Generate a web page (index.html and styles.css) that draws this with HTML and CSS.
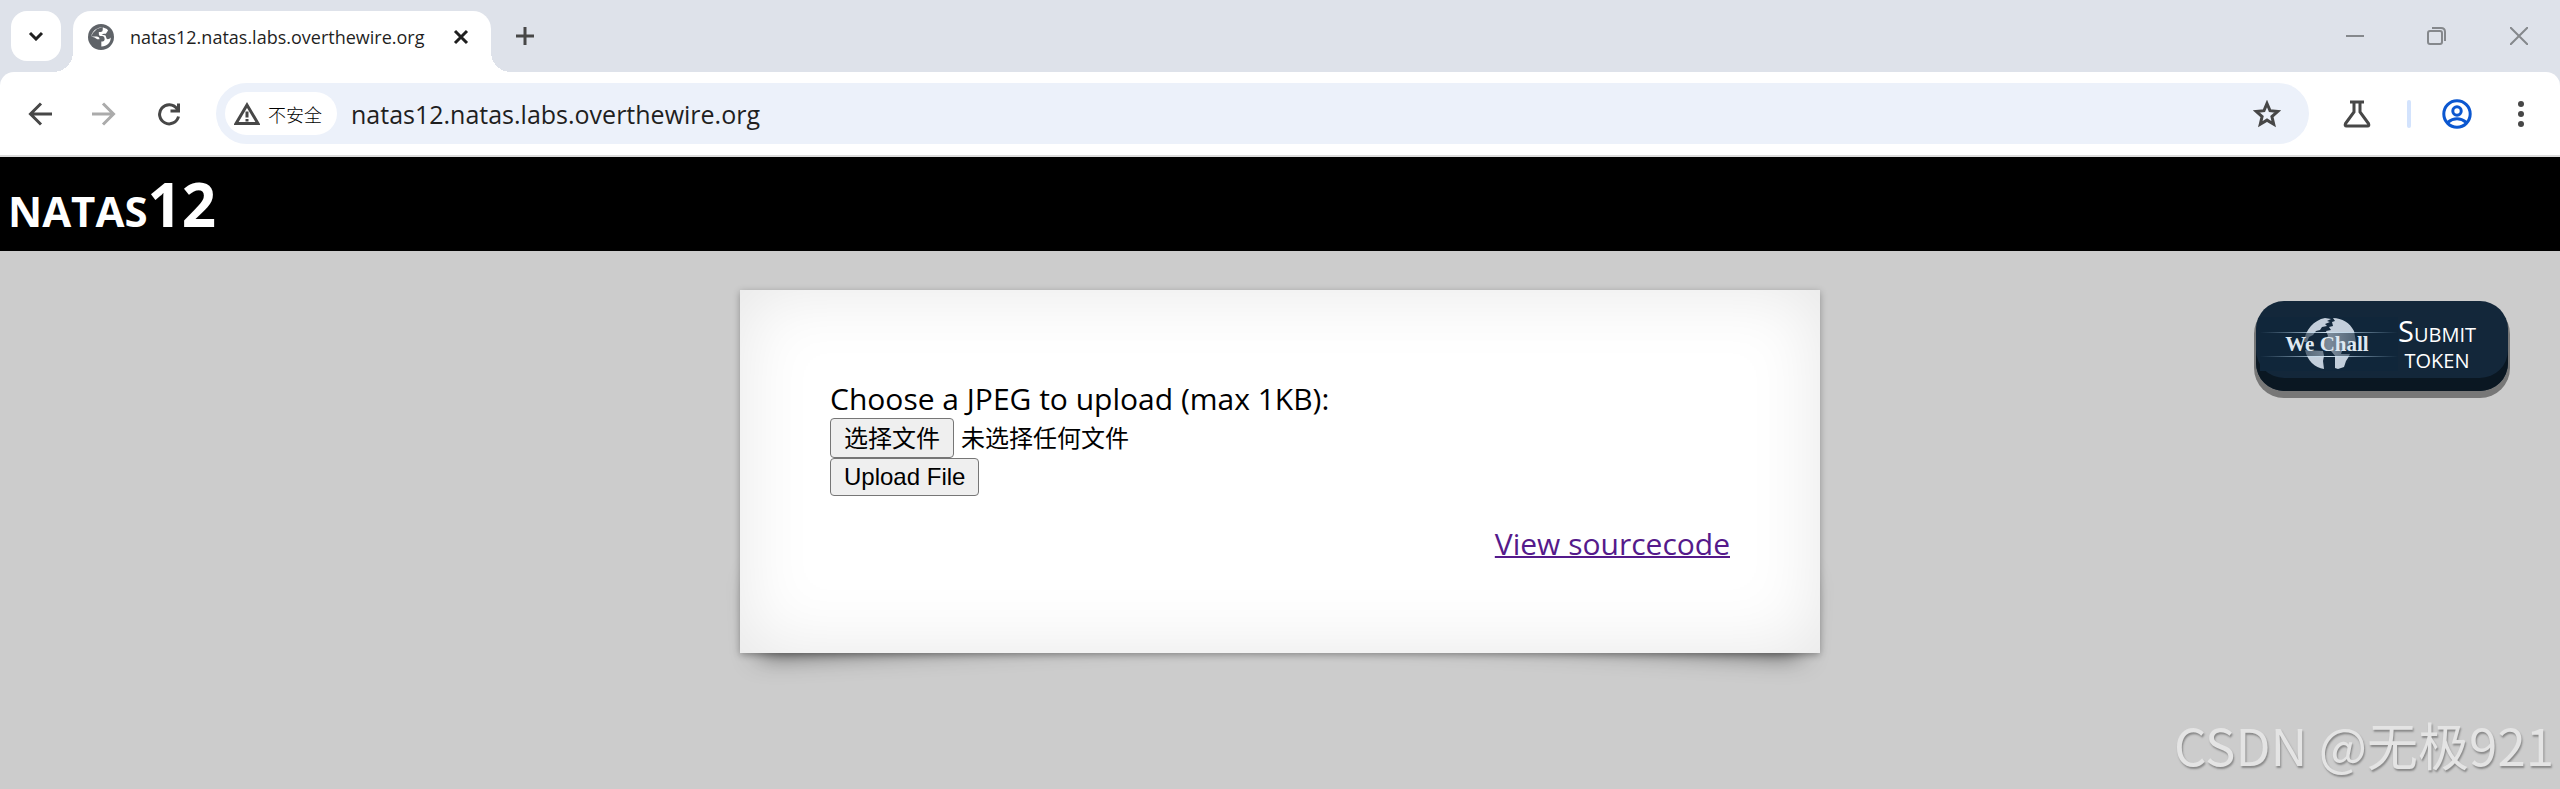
FILE: index.html
```html
<!DOCTYPE html>
<html lang="zh-CN">
<head>
    <meta charset="UTF-8">
    <meta name="viewport" content="width=device-width, initial-scale=1.0">
    <title>natas12.natas.labs.overthewire.org</title>
    <link rel="stylesheet" href="styles.css">
</head>
<body>
    <header class="browser">
        <div class="tabstrip">
            <button class="tab-search" aria-label="Search tabs">
                <svg width="16" height="10" viewBox="0 0 16 10"><path d="M2 2l6 6 6-6"/></svg>
            </button>
            <div class="tab">
                <svg class="tab__icon" width="26" height="26" viewBox="0 0 24 24">
                    <circle cx="12" cy="12" r="12"/>
                    <path fill="#fff" d="M3 11.500C3.500 7 8 2.800 13.600 3v2.600q0 1.800-2 1.800H10v2q0 1.500 1.500 1.600h1.800q2 .200 2 2.400v1.200q-.200 1.600-1.800 1.600h-1.200v4.600C17 21 21 17.500 21 12.500q-1 1.500-2.800 1.500-1.500-.200-1.500-2 0-1.800-2-1.800h-2.200l2-1.200h2l2-3-1-1.500-4-1.600-5 1.500-4 4zM3 11.500h5q2.600 0 2.600 2.600H8.500L6 12.500z"/>
                </svg>
                <span class="tab__title">natas12.natas.labs.overthewire.org</span>
                <button class="tab__close" aria-label="Close tab">
                    <svg width="16" height="16" viewBox="0 0 16 16"><path d="M2 2l12 12M14 2L2 14"/></svg>
                </button>
            </div>
            <button class="tab-new" aria-label="New tab">
                <svg width="18" height="18" viewBox="0 0 18 18"><path d="M9 0v18M0 9h18"/></svg>
            </button>
            <div class="window-controls">
                <button class="window-btn" aria-label="Minimize">
                    <svg width="18" height="18" viewBox="0 0 18 18"><path d="M0 9h18"/></svg>
                </button>
                <button class="window-btn" aria-label="Restore">
                    <svg width="20" height="20" viewBox="0 0 20 20"><rect x="1" y="5" width="14" height="13" rx="2"/><path d="M5 2h9q4 0 4 4v9"/></svg>
                </button>
                <button class="window-btn" aria-label="Close">
                    <svg width="18" height="18" viewBox="0 0 18 18"><path d="M0 0l18 18M18 0L0 18"/></svg>
                </button>
            </div>
        </div>

        <div class="toolbar">
            <button class="tool-btn" aria-label="Back">
                <svg width="24" height="24" viewBox="0 0 24 24"><path d="M24 12H3M13 1.500L2.500 12 13 22.500"/></svg>
            </button>
            <button class="tool-btn tool-btn--disabled" aria-label="Forward">
                <svg width="24" height="24" viewBox="0 0 24 24"><path d="M0 12h21M11 1.500L21.500 12 11 22.500"/></svg>
            </button>
            <button class="tool-btn" aria-label="Reload">
                <svg width="24" height="24" viewBox="0 0 24 24"><path d="M22.500 14.500A9.600 9.600 0 1 1 21 6.700l1.500 2M22.500 1.500v7.500h-8"/></svg>
            </button>
            <div class="omnibox">
                <button class="omnibox__chip">
                    <svg width="26" height="24" viewBox="0 0 26 24"><path d="M13 3l11 18.500H2zM13 9.500v6M13 17v2.500"/></svg>
                    <span>不安全</span>
                </button>
                <input class="omnibox__url" type="text" value="natas12.natas.labs.overthewire.org" aria-label="Address">
                <button class="omnibox__star" aria-label="Bookmark">
                    <svg width="28" height="28" viewBox="0 0 28 28"><path d="M14 3.500l3 7.200 7.800.700-5.900 5.100 1.800 7.700L14 20.100l-6.700 4.100 1.800-7.700-5.900-5.100 7.800-.700z"/></svg>
                </button>
            </div>
            <button class="tool-btn" aria-label="Labs">
                <svg width="28" height="28" viewBox="0 0 28 28"><path d="M7 2h14M11 2v10L2.500 23.500q-1 2.500 1 2.500h21q2 0 1-2.500L17 12V2"/></svg>
            </button>
            <span class="toolbar__divider"></span>
            <button class="tool-btn tool-btn--profile" aria-label="Profile">
                <svg width="30" height="30" viewBox="0 0 30 30"><circle cx="15" cy="15" r="13.200"/><circle cx="15" cy="12" r="4.200"/><path d="M5.500 23.500q9.500-7.500 19 0"/></svg>
            </button>
            <button class="tool-btn tool-btn--menu" aria-label="Menu">
                <svg width="6" height="26" viewBox="0 0 6 26"><circle cx="3" cy="3" r="3"/><circle cx="3" cy="13" r="3"/><circle cx="3" cy="23" r="3"/></svg>
            </button>
        </div>
    </header>

    <h1 class="level-title">natas12</h1>

    <main class="page">
        <div class="content">
            <form class="upload">
                <div>Choose a JPEG to upload (max 1KB):</div>
                <div class="upload__row">
                    <input class="upload__input" type="file" id="uploadedfile">
                    <label class="upload__choose" for="uploadedfile">选择文件</label>
                    <span class="upload__status">未选择任何文件</span>
                </div>
                <button class="upload__submit" type="submit">Upload File</button>
            </form>
            <a class="viewsource" href="#">View sourcecode</a>
        </div>

        <a class="wechall" href="#">
            <svg class="wechall__logo" width="138" height="54" viewBox="0 0 138 54">
                <defs>
                    <linearGradient id="flare">
                        <stop offset="0" stop-color="#9fc4e0" stop-opacity="0"/>
                        <stop offset=".5" stop-color="#cfe2f0"/>
                        <stop offset="1" stop-color="#9fc4e0" stop-opacity="0"/>
                    </linearGradient>
                    <linearGradient id="band">
                        <stop offset="0" stop-color="#10263a"/>
                        <stop offset=".5" stop-color="#10263a" stop-opacity=".4"/>
                        <stop offset="1" stop-color="#10263a"/>
                    </linearGradient>
                </defs>
                <rect width="138" height="54" fill="#10263a"/>
                <circle cx="70" cy="27" r="26" fill="#14293d"/>
                <g fill="#c3cedb">
                    <path d="M44 25C45 13 54 3 65 1l6 1-4 2 3 1-5 2 2 2-5 1-2 3-4 1-3 4-4 2-2 5z"/>
                    <path d="M73 1c9 0 17 5 21 13l2 11-2 3-3-3-1 6-4 2-2-4-3 8-5 3-5-6-6-1-1-8 4-6-2-5 5-1-2-3 4-1-1-4 3-1z"/>
                    <path d="M45 33l18 1 1 5-1 5 1 8C55 51 47 43 45 33z"/>
                    <path d="M75 37h15l-2 4-2 3-2 6-6 2-3-1z"/>
                </g>
                <rect y="16" width="138" height="23" fill="url(#band)"/>
                <rect y="15" width="138" height="1" fill="url(#flare)"/>
                <rect y="39" width="138" height="1" fill="url(#flare)"/>
                <text class="wechall__name" x="67" y="34" text-anchor="middle">We Chall</text>
            </svg>
            <span class="wechall__label">Submit token</span>
        </a>
    </main>

    <div class="watermark">CSDN @无极921</div>
</body>
</html>
```
FILE: styles.css
```css
* {
    box-sizing: border-box;
}

body {
    margin: 0;
    min-height: 100vh;
    position: relative;
    background: #ccc;
    color: #000;
    font-family: "Open Sans", "Noto Sans CJK SC", sans-serif;
    font-size: 30px;
    line-height: 38px;
}

button {
    padding: 0;
    border: 0;
    background: none;
    font-family: inherit;
    color: inherit;
}

svg {
    display: block;
    flex: none;
}

.browser {
    background: #dee2ea;
}

/* tab strip */
.tabstrip {
    display: flex;
    align-items: center;
    height: 72px;
    padding-left: 11px;
}

.tabstrip svg {
    fill: none;
    stroke: #1f1f1f;
    stroke-width: 3;
}

.tab-search {
    display: grid;
    place-items: center;
    width: 50px;
    height: 50px;
    border-radius: 16px;
    background: #fff;
}

.tab {
    position: relative;
    display: flex;
    align-items: center;
    align-self: flex-end;
    width: 418px;
    height: 61px;
    margin-left: 12px;
    padding: 0 22px 10px 15px;
    border-radius: 18px 18px 0 0;
    background: #fff;
}

.tab::before,
.tab::after {
    content: "";
    position: absolute;
    bottom: 0;
    width: 20px;
    height: 20px;
}

.tab::before {
    right: 100%;
    background: radial-gradient(circle at 0 0, transparent 20px, #fff 20px);
}

.tab::after {
    left: 100%;
    background: radial-gradient(circle at 100% 0, transparent 20px, #fff 20px);
}

.tabstrip .tab__icon {
    fill: #5f6368;
    stroke: none;
}

.tab__title {
    flex: 1;
    margin-left: 16px;
    color: #1f1f1f;
    font-size: 18px;
    line-height: 24px;
    white-space: nowrap;
}

.tab-new {
    margin-left: 25px;
}

.tabstrip .tab-new svg {
    stroke: #474747;
}

.window-controls {
    display: flex;
    margin-left: auto;
}

.window-btn {
    display: grid;
    place-items: center;
    width: 82px;
    height: 72px;
}

.window-controls svg {
    stroke: #85888c;
    stroke-width: 2;
}

/* toolbar */
.toolbar {
    display: flex;
    align-items: center;
    height: 85px;
    padding: 0 7px 0 8px;
    border-bottom: 2px solid #dcdcdc;
    border-radius: 14px 14px 0 0;
    background: #fff;
}

.toolbar svg {
    fill: none;
    stroke: #474747;
    stroke-width: 3;
}

.tool-btn {
    display: grid;
    place-items: center;
    width: 64px;
    height: 60px;
}

.toolbar .tool-btn--disabled svg {
    stroke: #ababab;
}

.toolbar .tool-btn--profile svg {
    stroke: #0b57d0;
}

.toolbar .tool-btn--menu svg {
    fill: #474747;
    stroke: none;
}

.toolbar__divider {
    width: 4px;
    height: 28px;
    margin: 0 14px 0 18px;
    border-radius: 2px;
    background: #d3e3fd;
}

.omnibox {
    display: flex;
    flex: 1;
    align-items: center;
    height: 61px;
    margin: 0 16px;
    padding: 0 28px 0 9px;
    border-radius: 31px;
    background: #ecf1fa;
}

.omnibox__chip {
    display: flex;
    align-items: center;
    gap: 8px;
    height: 43px;
    padding: 0 15px 0 9px;
    border-radius: 22px;
    background: #fff;
    color: #000;
    font-family: "Noto Sans CJK SC", sans-serif;
    font-size: 18px;
    font-weight: 300;
}

.omnibox__url {
    flex: 1;
    margin-left: 14px;
    padding: 0;
    border: 0;
    outline: 0;
    background: none;
    color: #1f1f1f;
    font-family: inherit;
    font-size: 25px;
}

/* page */
.level-title {
    margin: 0;
    padding: 0 8px;
    background: #000;
    color: #fff;
    font-size: 60px;
    line-height: 94px;
    font-variant: small-caps;
}

/* own stacking context, so the lifted corners stay above the grey body */
.page {
    position: relative;
    z-index: 0;
    display: grid;
    grid-template-columns: 1fr minmax(0, 1080px) 1fr;
    align-items: start;
    padding-top: 39px;
}

.content {
    position: relative;
    grid-column: 2;
    display: flex;
    flex-direction: column;
    padding: 90px;
    background: #fff;
    box-shadow: 0 2px 7px rgba(0, 0, 0, 0.3), 0 0 72px rgba(0, 0, 0, 0.1) inset;
}

.content::before,
.content::after {
    content: "";
    position: absolute;
    z-index: -1;
    bottom: 27px;
    left: 18px;
    width: 50%;
    height: 20%;
    box-shadow: 0 14px 27px rgba(0, 0, 0, 0.7);
    transform: rotate(-3deg);
}

.content::after {
    right: 18px;
    left: auto;
    transform: rotate(3deg);
}

.upload__row {
    display: flex;
    align-items: center;
    gap: 7px;
    height: 40px;
    font-size: 24px;
}

.upload__input {
    position: absolute;
    width: 1px;
    height: 1px;
    opacity: 0;
}

.upload__choose,
.upload__submit {
    padding: 0 13px;
    border: 1px solid #767676;
    border-radius: 4px;
    background: #efefef;
    font-size: 24px;
}

.upload__submit {
    display: block;
    height: 38px;
    font-family: "Liberation Sans", sans-serif;
}

.viewsource {
    align-self: flex-end;
    margin-top: 29px;
    color: #551a8b;
    text-decoration-thickness: 2px;
}

.wechall {
    display: flex;
    align-items: center;
    justify-self: end;
    width: 252px;
    height: 90px;
    margin: 11px 52px 0 0;
    padding: 0 32px 4px 4px;
    border-radius: 28px;
    background: #13273a;
    box-shadow: 0 -13px 0 #0a1722 inset, 0 5px 0 2px #777;
    color: #fff;
    text-decoration: none;
}

.wechall__name {
    fill: #dfe8f1;
    font-family: "Liberation Serif", serif;
    font-size: 21px;
    font-weight: bold;
}

.wechall__label {
    flex: 1;
    font-size: 29px;
    line-height: 26px;
    font-variant: small-caps;
    text-align: center;
}

.watermark {
    position: absolute;
    right: 6px;
    bottom: 10px;
    color: #e4e4e4;
    font-family: "Noto Sans CJK SC", sans-serif;
    font-size: 51px;
    line-height: 70px;
    text-shadow: 1px 2px 2px #888;
}
```
